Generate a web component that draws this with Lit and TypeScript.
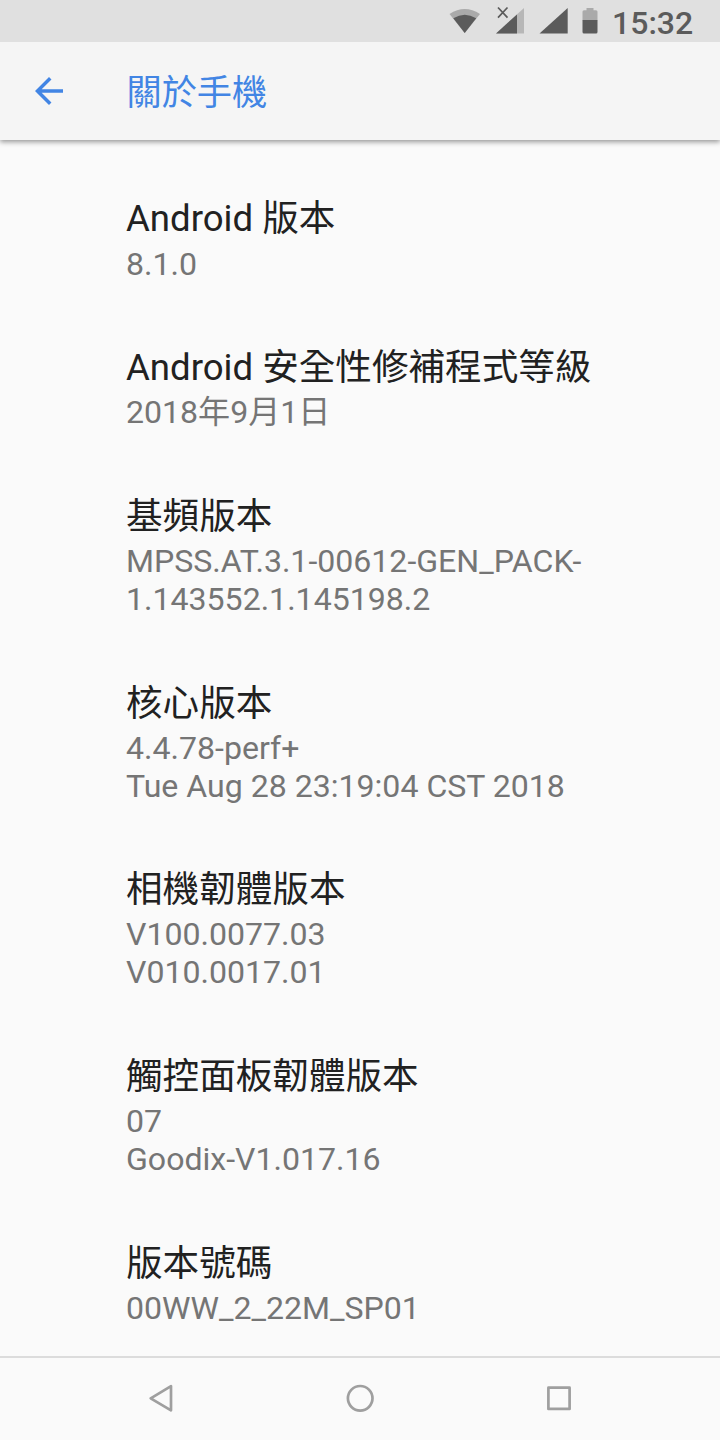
import { LitElement, html, css } from "lit";
import { customElement } from "lit/decorators.js";

const ITEMS: { title: string; lines: string[] }[] = [
  { title: "Android 版本", lines: ["8.1.0"] },
  { title: "Android 安全性修補程式等級", lines: ["2018年9月1日"] },
  { title: "基頻版本", lines: ["MPSS.AT.3.1-00612-GEN_PACK-", "1.143552.1.145198.2"] },
  { title: "核心版本", lines: ["4.4.78-perf+", "Tue Aug 28 23:19:04 CST 2018"] },
  { title: "相機韌體版本", lines: ["V100.0077.03", "V010.0017.01"] },
  { title: "觸控面板韌體版本", lines: ["07", "Goodix-V1.017.16"] },
  { title: "版本號碼", lines: ["00WW_2_22M_SP01"] },
];

@customElement("app-root")
export class AppRoot extends LitElement {
  static styles = css`
    :host {
      display: flex;
      flex-direction: column;
      width: 720px;
      height: 1440px;
      overflow: hidden;
      background: #fafafa;
      font-family: Roboto, "Noto Sans CJK TC", sans-serif;
    }
    svg { display: block; flex: none; }
    .status {
      flex: none;
      height: 42px;
      background: #e0e0e0;
      display: flex;
      justify-content: flex-end;
      z-index: 2;
    }
    .clock {
      width: 80px;
      margin: 0 28px 0 12px;
      font-size: 32px;
      line-height: 46px;
      font-weight: 500;
      color: #5b5b5b;
      white-space: nowrap;
    }
    .bar {
      flex: none;
      height: 98px;
      background: #f5f5f5;
      box-shadow: 0 2px 5px rgba(0, 0, 0, 0.4);
      display: flex;
      align-items: center;
      z-index: 1;
    }
    .back { margin-left: 28px; }
    .heading {
      margin: 0 0 0 56.5px;
      padding-top: 3px;
      font-size: 35.2px;
      line-height: 50px;
      font-weight: 400;
      color: #4285e4;
    }
    .list {
      flex: 1;
      min-height: 0;
      overflow: hidden;
      padding: 24px 0 0 126px;
    }
    .item { padding: 30.45px 0 30.08px; }
    .title {
      height: 50.2px;
      line-height: 49px;
      font-size: 36.6px;
      color: #212121;
      white-space: nowrap;
    }
    .line {
      height: 38px;
      line-height: 38px;
      font-size: 32.1px;
      color: #757575;
      white-space: nowrap;
    }
    .nav {
      flex: none;
      height: 82px;
      border-top: 2px solid #dcdcdc;
      display: flex;
    }
  `;

  render() {
    return html`
      <div class="status">
        <svg width="160" height="42" viewBox="440 0 160 42">
          <path d="M449.5 14Q464.7 3.8 480 14L464.7 33Z" fill="#aaa" />
          <path d="M453.3 18.3Q464.7 11 476.2 18.3L464.7 33Z" fill="#5b5b5b" />
          <path d="M524 8V33.5H496Z" fill="#b7b7b7" />
          <path d="M517 14.4V33.5H496Z" fill="#5b5b5b" />
          <path d="M498 7.5L507.5 17.7M507.5 7.5L498 17.7" stroke="#5b5b5b" stroke-width="1.7" />
          <path d="M567.7 8V33.5H539.5Z" fill="#5b5b5b" />
          <path d="M586.5 8h7v2.2h2.5q1.5 0 1.5 1.5v8.5h-15v-8.5q0-1.5 1.5-1.5h2.5z" fill="#aaa" />
          <path d="M582.5 20h15v12q0 1.5-1.5 1.5h-12q-1.5 0-1.5-1.5z" fill="#5b5b5b" />
        </svg>
        <div class="clock">15:32</div>
      </div>
      <header class="bar">
        <svg class="back" width="42" height="42" viewBox="0 0 24 24">
          <path d="M20 11H7.83l5.59-5.59L12 4l-8 8 8 8 1.41-1.41L7.83 13H20v-2z" fill="#4285e4" />
        </svg>
        <h1 class="heading">關於手機</h1>
      </header>
      <main class="list">
        ${ITEMS.map(
          (item) => html`<section class="item">
            <div class="title">${item.title}</div>
            ${item.lines.map((line) => html`<div class="line">${line}</div>`)}
          </section>`
        )}
      </main>
      <nav class="nav">
        <svg width="720" height="82" viewBox="0 1358 720 82" fill="none" stroke="#9f9f9f" stroke-width="2.7" stroke-linejoin="round">
          <path d="M171 1386.2V1410.3L150.7 1398.3Z" />
          <circle cx="360.2" cy="1398.3" r="12.3" />
          <rect x="548.4" y="1387.7" width="21.2" height="21.2" />
        </svg>
      </nav>
    `;
  }
}
